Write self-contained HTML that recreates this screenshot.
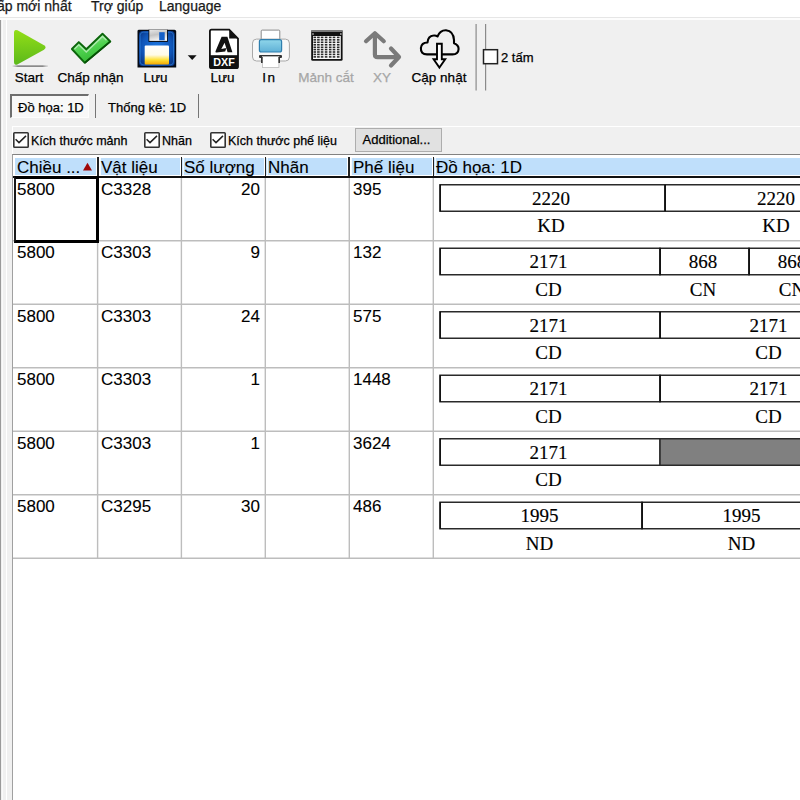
<!DOCTYPE html>
<html><head><meta charset="utf-8">
<style>
*{margin:0;padding:0;box-sizing:border-box}
html,body{width:800px;height:800px;overflow:hidden;background:#f0f0f0;font-family:"Liberation Sans",sans-serif;color:#000;position:relative}
.mt,.lbl,.chk{-webkit-text-stroke:0.25px currentColor}
.ct,.ht{-webkit-text-stroke:0.1px currentColor}
.sn{-webkit-text-stroke:0.15px #000}
.a{position:absolute}
.menu{position:absolute;left:0;top:0;width:800px;height:17px;background:#fff}
.mt{position:absolute;top:-2px;font-size:14px;line-height:17px;white-space:nowrap;color:#1a1a1a}
.lbl{position:absolute;top:70px;font-size:13.5px;line-height:15px;text-align:center;white-space:nowrap;width:80px}
.ct{position:absolute;font-size:17px;line-height:17px;white-space:nowrap}
.ct.r{text-align:right}
.ht{position:absolute;top:159px;font-size:17px;line-height:17px;white-space:nowrap}
.hd{position:absolute;top:157px;width:1.5px;height:19.3px;background:#222;box-shadow:-1px 0 0 #fff,1.8px 0 0 #fff}
.vl{position:absolute;top:177px;width:1px;height:382px;background:#c8c8c8}
.hl{position:absolute;left:13px;width:787px;height:1px;background:#c0c0c0}
.sn{position:absolute;width:100px;text-align:center;font-family:"Liberation Serif",serif;font-size:19px;line-height:19px;white-space:nowrap}
.cb{position:absolute;width:15.5px;height:15.5px;border:2px solid #474747;background:#fff}
.chk{position:absolute;font-size:12.5px;line-height:15px;white-space:nowrap}
</style></head><body>
<!-- menu -->
<div class="menu"></div>
<div class="a" style="left:0;top:17px;width:800px;height:1px;background:#e6e6e6"></div>
<div class="a" style="left:0;top:18px;width:800px;height:2px;background:#fdfdfd"></div>
<div class="mt" style="left:-3px">ấp mới nhất</div>
<div class="mt" style="left:91px">Trợ giúp</div>
<div class="mt" style="left:159px">Language</div>
<!-- left edges -->
<div class="a" style="left:0;top:20px;width:1.2px;height:780px;background:#9a9a9a"></div>
<div class="a" style="left:1.5px;top:20px;width:1.5px;height:780px;background:#fafafa"></div>
<div class="a" style="left:6px;top:20px;width:1px;height:780px;background:#fff"></div>
<svg class="a" style="left:0;top:0" width="800" height="100" viewBox="0 0 800 100">
<defs>
<linearGradient id="gPlay" x1="0" y1="0" x2="0" y2="1"><stop offset="0" stop-color="#93de17"/><stop offset="1" stop-color="#5cb91b"/></linearGradient>
<linearGradient id="gChk" x1="0.2" y1="0" x2="0.6" y2="1"><stop offset="0" stop-color="#9fe09f"/><stop offset="0.5" stop-color="#4fd24f"/><stop offset="1" stop-color="#2fb52f"/></linearGradient>
<radialGradient id="gFl" cx="0.5" cy="0.45" r="0.6"><stop offset="0" stop-color="#1f78e0"/><stop offset="0.7" stop-color="#0f55b8"/><stop offset="1" stop-color="#0a3a8c"/></radialGradient>
<linearGradient id="gLab" x1="0" y1="0" x2="0" y2="1"><stop offset="0" stop-color="#ffffff"/><stop offset="0.5" stop-color="#fffbe8"/><stop offset="0.75" stop-color="#ffe23a"/><stop offset="1" stop-color="#f5a800"/></linearGradient>
<linearGradient id="gSh" x1="0" y1="0" x2="0.3" y2="1"><stop offset="0" stop-color="#e8e8e8"/><stop offset="0.5" stop-color="#c4c4c4"/><stop offset="1" stop-color="#f4f4f4"/></linearGradient>
<linearGradient id="gPr" x1="0" y1="0" x2="0" y2="1"><stop offset="0" stop-color="#8fd6ea"/><stop offset="1" stop-color="#5fb0d6"/></linearGradient>
<linearGradient id="gShadowH" x1="0" y1="0" x2="1" y2="0"><stop offset="0" stop-color="#b0b0b0" stop-opacity="0.3"/><stop offset="0.15" stop-color="#8a8a8a"/><stop offset="0.85" stop-color="#8a8a8a"/><stop offset="1" stop-color="#b0b0b0" stop-opacity="0.3"/></linearGradient>
<radialGradient id="gShadow" cx="0.5" cy="0.5" r="0.5"><stop offset="0" stop-color="#888"/><stop offset="1" stop-color="#f0f0f0" stop-opacity="0"/></radialGradient>
</defs>
<!-- play -->
<rect x="12.5" y="65.3" width="35.5" height="1.8" fill="url(#gShadowH)"/><rect x="12.5" y="67.1" width="35.5" height="1" fill="#fafafa" opacity="0.7"/>
<path d="M17.5 30.3 Q14 28.8 14 33 L14 61.5 Q14 66 17.8 64.2 L44 49.8 Q47.2 47.5 44 45.3 Z" fill="url(#gPlay)"/>
<!-- check -->
<path d="M71.9 49 L78.8 42.1 L86.3 49.3 L102.5 33.7 L110.3 41.5 L84.8 62.8 Z" fill="url(#gChk)" stroke="#0b650b" stroke-width="1.9" stroke-linejoin="round"/>
<path d="M74.5 49 L78.8 44.8 L86.3 52 L102.5 36.5 L106.5 40.3" fill="none" stroke="#c8f0c8" stroke-width="1.3" opacity="0.75"/>
<path d="M110.3 41.5 L84.8 62.8" fill="none" stroke="#065006" stroke-width="1.6"/>
<!-- floppy -->
<path d="M137.5 31 Q137.5 29.7 139 29.7 L174.5 29.7 Q176.2 29.7 176.2 31.5 L176.2 67.5 L137.5 67.5 Z" fill="#050a14"/>
<rect x="139" y="31" width="35.7" height="35" rx="3.5" fill="url(#gFl)"/><rect x="140.2" y="32.2" width="33.3" height="32.6" rx="3" fill="none" stroke="#3a9af5" stroke-width="0.8" opacity="0.6"/>
<rect x="148.5" y="29.7" width="19.3" height="12.2" fill="#0a0a0a"/><rect x="149.3" y="29.7" width="17.7" height="11.2" fill="url(#gSh)"/>
<rect x="159.2" y="32.2" width="5.5" height="8.1" fill="#1560c8"/>
<rect x="144.7" y="45.4" width="24.3" height="19.1" rx="1" fill="url(#gLab)"/>
<!-- dropdown arrow -->
<path d="M187.7 55.2 L196.6 55.2 L192.2 59.9 Z" fill="#111"/>
<!-- dxf -->
<path d="M211.5 29.7 L229.2 29.7 L238 38.5 L238 66.5 Q238 68.2 236.3 68.2 L211.5 68.2 Q209.9 68.2 209.9 66.5 L209.9 31.4 Q209.9 29.7 211.5 29.7 Z" fill="#fff" stroke="#111" stroke-width="1.8"/>
<path d="M229.2 29.7 L238 38.5 L229.2 38.5 Z" fill="#111"/>
<rect x="209.9" y="55.2" width="28.1" height="13" fill="#111"/>
<text x="224" y="65.6" font-family="Liberation Sans" font-weight="bold" font-size="11" fill="#fff" text-anchor="middle" textLength="21.5" lengthAdjust="spacingAndGlyphs">DXF</text>
<path d="M221.6 36.8 L227.4 36.8 L232.4 52.2 L227.6 52.2 L224.6 42.8 L221.3 48.9 L226.4 48 L225.2 51.4 L216.6 52.6 Q215 52.7 215.5 51.2 Z" fill="#111"/>
<!-- printer -->
<rect x="261.2" y="30.1" width="18.6" height="10" rx="1" fill="#fff" stroke="#8a8a8a" stroke-width="1"/>
<rect x="252.5" y="39.1" width="36.9" height="21.9" rx="4" fill="#f8f8f8" stroke="#a8a8a8" stroke-width="1"/>
<rect x="259.4" y="39.7" width="22.2" height="12.3" rx="2" fill="url(#gPr)" stroke="#2f7fae" stroke-width="1.2"/>
<rect x="259" y="55" width="23" height="3" rx="1" fill="#333"/>
<rect x="262.4" y="56.5" width="16.5" height="11" fill="#fff" stroke="#bbb" stroke-width="0.8"/>
<rect x="261" y="57" width="1.6" height="6" fill="#333"/>
<rect x="278.4" y="57" width="1.6" height="6" fill="#333"/>
<!-- grid icon -->
<rect x="311.2" y="30" width="31.4" height="30.75" rx="1.5" fill="#111"/>
<rect x="311.2" y="30" width="31.4" height="2" fill="#7a7a7a"/>
<rect x="312.2" y="33" width="1.6" height="2" fill="#888"/><rect x="340" y="33" width="1.6" height="2" fill="#888"/>
<rect x="313" y="36" width="27.8" height="23" fill="#fafafa"/>
<rect x="313.50" y="36.60" width="2.6" height="1.6" fill="#2a2a2a"/><rect x="313.50" y="39.05" width="2.6" height="1.6" fill="#2a2a2a"/><rect x="313.50" y="41.50" width="2.6" height="1.6" fill="#2a2a2a"/><rect x="313.50" y="44.00" width="2.6" height="1.6" fill="#2a2a2a"/><rect x="313.50" y="46.50" width="2.6" height="1.6" fill="#2a2a2a"/><rect x="313.50" y="48.80" width="2.6" height="1.6" fill="#2a2a2a"/><rect x="313.50" y="51.20" width="2.6" height="1.6" fill="#2a2a2a"/><rect x="313.50" y="53.60" width="2.6" height="1.6" fill="#2a2a2a"/><rect x="313.50" y="56.10" width="2.6" height="1.6" fill="#2a2a2a"/><rect x="317.10" y="36.60" width="2.6" height="1.6" fill="#2a2a2a"/><rect x="317.10" y="39.05" width="2.6" height="1.6" fill="#2a2a2a"/><rect x="317.10" y="41.50" width="2.6" height="1.6" fill="#2a2a2a"/><rect x="317.10" y="44.00" width="2.6" height="1.6" fill="#2a2a2a"/><rect x="317.10" y="46.50" width="2.6" height="1.6" fill="#2a2a2a"/><rect x="317.10" y="48.80" width="2.6" height="1.6" fill="#2a2a2a"/><rect x="317.10" y="51.20" width="2.6" height="1.6" fill="#2a2a2a"/><rect x="317.10" y="53.60" width="2.6" height="1.6" fill="#2a2a2a"/><rect x="317.10" y="56.10" width="2.6" height="1.6" fill="#2a2a2a"/><rect x="320.80" y="36.60" width="2.6" height="1.6" fill="#2a2a2a"/><rect x="320.80" y="39.05" width="2.6" height="1.6" fill="#2a2a2a"/><rect x="320.80" y="41.50" width="2.6" height="1.6" fill="#2a2a2a"/><rect x="320.80" y="44.00" width="2.6" height="1.6" fill="#2a2a2a"/><rect x="320.80" y="46.50" width="2.6" height="1.6" fill="#2a2a2a"/><rect x="320.80" y="48.80" width="2.6" height="1.6" fill="#2a2a2a"/><rect x="320.80" y="51.20" width="2.6" height="1.6" fill="#2a2a2a"/><rect x="320.80" y="53.60" width="2.6" height="1.6" fill="#2a2a2a"/><rect x="320.80" y="56.10" width="2.6" height="1.6" fill="#2a2a2a"/><rect x="324.80" y="36.60" width="2.6" height="1.6" fill="#2a2a2a"/><rect x="324.80" y="39.05" width="2.6" height="1.6" fill="#2a2a2a"/><rect x="324.80" y="41.50" width="2.6" height="1.6" fill="#2a2a2a"/><rect x="324.80" y="44.00" width="2.6" height="1.6" fill="#2a2a2a"/><rect x="324.80" y="46.50" width="2.6" height="1.6" fill="#2a2a2a"/><rect x="324.80" y="48.80" width="2.6" height="1.6" fill="#2a2a2a"/><rect x="324.80" y="51.20" width="2.6" height="1.6" fill="#2a2a2a"/><rect x="324.80" y="53.60" width="2.6" height="1.6" fill="#2a2a2a"/><rect x="324.80" y="56.10" width="2.6" height="1.6" fill="#2a2a2a"/><rect x="328.90" y="36.60" width="2.6" height="1.6" fill="#2a2a2a"/><rect x="328.90" y="39.05" width="2.6" height="1.6" fill="#2a2a2a"/><rect x="328.90" y="41.50" width="2.6" height="1.6" fill="#2a2a2a"/><rect x="328.90" y="44.00" width="2.6" height="1.6" fill="#2a2a2a"/><rect x="328.90" y="46.50" width="2.6" height="1.6" fill="#2a2a2a"/><rect x="328.90" y="48.80" width="2.6" height="1.6" fill="#2a2a2a"/><rect x="328.90" y="51.20" width="2.6" height="1.6" fill="#2a2a2a"/><rect x="328.90" y="53.60" width="2.6" height="1.6" fill="#2a2a2a"/><rect x="328.90" y="56.10" width="2.6" height="1.6" fill="#2a2a2a"/><rect x="332.70" y="36.60" width="2.6" height="1.6" fill="#2a2a2a"/><rect x="332.70" y="39.05" width="2.6" height="1.6" fill="#2a2a2a"/><rect x="332.70" y="41.50" width="2.6" height="1.6" fill="#2a2a2a"/><rect x="332.70" y="44.00" width="2.6" height="1.6" fill="#2a2a2a"/><rect x="332.70" y="46.50" width="2.6" height="1.6" fill="#2a2a2a"/><rect x="332.70" y="48.80" width="2.6" height="1.6" fill="#2a2a2a"/><rect x="332.70" y="51.20" width="2.6" height="1.6" fill="#2a2a2a"/><rect x="332.70" y="53.60" width="2.6" height="1.6" fill="#2a2a2a"/><rect x="332.70" y="56.10" width="2.6" height="1.6" fill="#2a2a2a"/><rect x="336.90" y="36.60" width="2.6" height="1.6" fill="#2a2a2a"/><rect x="336.90" y="39.05" width="2.6" height="1.6" fill="#2a2a2a"/><rect x="336.90" y="41.50" width="2.6" height="1.6" fill="#2a2a2a"/><rect x="336.90" y="44.00" width="2.6" height="1.6" fill="#2a2a2a"/><rect x="336.90" y="46.50" width="2.6" height="1.6" fill="#2a2a2a"/><rect x="336.90" y="48.80" width="2.6" height="1.6" fill="#2a2a2a"/><rect x="336.90" y="51.20" width="2.6" height="1.6" fill="#2a2a2a"/><rect x="336.90" y="53.60" width="2.6" height="1.6" fill="#2a2a2a"/><rect x="336.90" y="56.10" width="2.6" height="1.6" fill="#2a2a2a"/>
<!-- xy arrows -->
<g fill="none" stroke="#7a7a7a" stroke-width="4.2" stroke-linejoin="round" stroke-linecap="round">
<path d="M374.9 34 L374.9 54.5 Q374.9 57.2 377.6 57.2 L398 57.2"/>
<path d="M366 41.2 L374.9 33.3 L383.8 41.2"/>
<path d="M391 48.5 L399 57 L391 65.5"/>
</g>
<!-- cloud -->
<path d="M427 54.4 Q420.5 54.4 420.9 48 Q421.5 42.5 427.5 42.5 Q428 36 433.5 35.5 Q436 35.2 437.5 36.5 Q440 30 446 30.2 Q453.5 31 454 40 L454 43.3 Q458.7 45 458.6 49 Q458.3 54.4 452.5 54.4 Z" fill="none" stroke="#000" stroke-width="2.1" stroke-linejoin="round"/>
<path d="M437 43.8 L441.8 43.8 L441.8 59.3 L445.2 59.3 L439.4 67.6 L433.6 59.3 L437 59.3 Z" fill="#fff" stroke="#000" stroke-width="1.9" stroke-linejoin="miter"/>
<!-- separators -->
<rect x="475.5" y="24" width="1.2" height="66.5" fill="#8a8a8a"/>
<rect x="485" y="24" width="1.2" height="66.5" fill="#8a8a8a"/>
<rect x="483.5" y="49.7" width="14" height="14" fill="#fff" stroke="#222" stroke-width="1.5"/>
</svg>
<div class="lbl" style="left:-11px">Start</div>
<div class="lbl" style="left:50.6px">Chấp nhận</div>
<div class="lbl" style="left:115.5px">Lưu</div>
<div class="lbl" style="left:182.5px">Lưu</div>
<div class="lbl" style="left:229.5px;letter-spacing:1.5px">In</div>
<div class="lbl" style="left:286px;color:#a6a6a6">Mảnh cắt</div>
<div class="lbl" style="left:342px;color:#a6a6a6">XY</div>
<div class="lbl" style="left:399px">Cập nhật</div>
<div class="chk" style="left:501px;top:50px;font-size:13px">2 tấm</div>
<!-- tabs -->
<div class="a" style="left:9.6px;top:93.7px;width:79px;height:24.3px;background:#f8f8f8;border-top:2.4px solid #6e6e6e;border-left:2.4px solid #6e6e6e;border-right:1px solid #fdfdfd;border-bottom:1.6px solid #fdfdfd"></div>
<div class="chk" style="left:18px;top:99.5px;font-size:13px">Đồ họa: 1D</div>
<div class="a" style="left:94.5px;top:94px;width:1.3px;height:24px;background:#757575"></div>
<div class="chk" style="left:108px;top:99.5px;font-size:13px">Thống kê: 1D</div>
<div class="a" style="left:197.5px;top:94px;width:1.3px;height:24px;background:#757575"></div>
<!-- panel top highlight -->
<div class="a" style="left:12px;top:126px;width:788px;height:1px;background:#fff"></div>
<div class="a" style="left:12px;top:126px;width:1px;height:28px;background:#fff"></div>
<!-- checkboxes -->
<svg class="a" style="left:13px;top:132px" width="16" height="16" viewBox="0 0 16 16"><rect x="0.8" y="0.8" width="14.4" height="14.4" rx="0.8" fill="#fff" stroke="#333" stroke-width="1.6"/><path d="M2.6 7.2 L6 10.6 L13 3.9" fill="none" stroke="#222" stroke-width="1.5"/></svg>
<div class="chk" style="left:31px;top:133.5px">Kích thước mảnh</div>
<svg class="a" style="left:144px;top:132px" width="16" height="16" viewBox="0 0 16 16"><rect x="0.8" y="0.8" width="14.4" height="14.4" rx="0.8" fill="#fff" stroke="#333" stroke-width="1.6"/><path d="M2.6 7.2 L6 10.6 L13 3.9" fill="none" stroke="#222" stroke-width="1.5"/></svg>
<div class="chk" style="left:162px;top:133.5px">Nhãn</div>
<svg class="a" style="left:210px;top:132px" width="16" height="16" viewBox="0 0 16 16"><rect x="0.8" y="0.8" width="14.4" height="14.4" rx="0.8" fill="#fff" stroke="#333" stroke-width="1.6"/><path d="M2.6 7.2 L6 10.6 L13 3.9" fill="none" stroke="#222" stroke-width="1.5"/></svg>
<div class="chk" style="left:228px;top:133.5px">Kích thước phế liệu</div>
<div class="a" style="left:354.5px;top:128px;width:87.5px;height:23.5px;background:#e1e1e1;border:1px solid #adadad"></div>
<div class="chk" style="left:362.5px;top:132px;font-size:13px">Additional...</div>
<!-- grid -->
<div class="a" style="left:12px;top:154px;width:788px;height:646px;background:#fff;border-top:1px solid #828282;border-left:1px solid #a0a0a0"></div>
<div class="a" style="left:15.25px;top:158px;width:785px;height:16.75px;background:#bfdffb"></div>
<div class="a" style="left:13px;top:176.3px;width:787px;height:2.1px;background:#111"></div>
<div class="hd" style="left:97px"></div>
<div class="hd" style="left:180.5px"></div>
<div class="hd" style="left:264.5px"></div>
<div class="hd" style="left:348px"></div>
<div class="hd" style="left:432.5px"></div>
<div class="ht" style="left:17px">Chiều ...</div>
<svg class="a" style="left:82px;top:162px" width="11" height="9" viewBox="0 0 11 9"><path d="M1 8.5 L5.5 0.8 L10 8.5 Z" fill="#a00808"/></svg>
<div class="ht" style="left:101px">Vật liệu</div>
<div class="ht" style="left:184px">Số lượng</div>
<div class="ht" style="left:268px">Nhãn</div>
<div class="ht" style="left:353px">Phế liệu</div>
<div class="ht" style="left:436px">Đồ họa: 1D</div>
<svg class="a" style="left:0;top:0" width="800" height="800" viewBox="0 0 800 800"><line x1="13" y1="240.75" x2="800" y2="240.75" stroke="#bdbdbd" stroke-width="1.4"/>
<line x1="13" y1="304.25" x2="800" y2="304.25" stroke="#bdbdbd" stroke-width="1.4"/>
<line x1="13" y1="367.75" x2="800" y2="367.75" stroke="#bdbdbd" stroke-width="1.4"/>
<line x1="13" y1="431.25" x2="800" y2="431.25" stroke="#bdbdbd" stroke-width="1.4"/>
<line x1="13" y1="494.75" x2="800" y2="494.75" stroke="#bdbdbd" stroke-width="1.4"/>
<line x1="13" y1="558.25" x2="800" y2="558.25" stroke="#bdbdbd" stroke-width="1.4"/>
<line x1="97.6" y1="178" x2="97.6" y2="558.25" stroke="#bdbdbd" stroke-width="1.4"/>
<line x1="181.4" y1="178" x2="181.4" y2="558.25" stroke="#bdbdbd" stroke-width="1.4"/>
<line x1="265.3" y1="178" x2="265.3" y2="558.25" stroke="#bdbdbd" stroke-width="1.4"/>
<line x1="349.3" y1="178" x2="349.3" y2="558.25" stroke="#bdbdbd" stroke-width="1.4"/>
<line x1="433.3" y1="178" x2="433.3" y2="558.25" stroke="#bdbdbd" stroke-width="1.4"/>
<rect x="440" y="184.75" width="225" height="26.50" fill="#fff" stroke="#2a2a2a" stroke-width="1.5"/>
<line x1="440.2" y1="184.75" x2="440.2" y2="211.25" stroke="#000" stroke-width="1.2"/>
<rect x="665" y="184.75" width="225" height="26.50" fill="#fff" stroke="#2a2a2a" stroke-width="1.5"/>
<line x1="665.2" y1="184.75" x2="665.2" y2="211.25" stroke="#000" stroke-width="1.2"/>
<rect x="440" y="248.25" width="220" height="26.50" fill="#fff" stroke="#2a2a2a" stroke-width="1.5"/>
<line x1="440.2" y1="248.25" x2="440.2" y2="274.75" stroke="#000" stroke-width="1.2"/>
<rect x="660" y="248.25" width="89" height="26.50" fill="#fff" stroke="#2a2a2a" stroke-width="1.5"/>
<line x1="660.2" y1="248.25" x2="660.2" y2="274.75" stroke="#000" stroke-width="1.2"/>
<rect x="749" y="248.25" width="89" height="26.50" fill="#fff" stroke="#2a2a2a" stroke-width="1.5"/>
<line x1="749.2" y1="248.25" x2="749.2" y2="274.75" stroke="#000" stroke-width="1.2"/>
<rect x="440" y="311.75" width="220" height="26.50" fill="#fff" stroke="#2a2a2a" stroke-width="1.5"/>
<line x1="440.2" y1="311.75" x2="440.2" y2="338.25" stroke="#000" stroke-width="1.2"/>
<rect x="660" y="311.75" width="220" height="26.50" fill="#fff" stroke="#2a2a2a" stroke-width="1.5"/>
<line x1="660.2" y1="311.75" x2="660.2" y2="338.25" stroke="#000" stroke-width="1.2"/>
<rect x="440" y="375.25" width="220" height="26.50" fill="#fff" stroke="#2a2a2a" stroke-width="1.5"/>
<line x1="440.2" y1="375.25" x2="440.2" y2="401.75" stroke="#000" stroke-width="1.2"/>
<rect x="660" y="375.25" width="220" height="26.50" fill="#fff" stroke="#2a2a2a" stroke-width="1.5"/>
<line x1="660.2" y1="375.25" x2="660.2" y2="401.75" stroke="#000" stroke-width="1.2"/>
<rect x="440" y="438.75" width="220" height="26.50" fill="#fff" stroke="#2a2a2a" stroke-width="1.5"/>
<line x1="440.2" y1="438.75" x2="440.2" y2="465.25" stroke="#000" stroke-width="1.2"/>
<rect x="660" y="438.75" width="220" height="26.50" fill="#808080" stroke="#2a2a2a" stroke-width="1.5"/>
<rect x="440" y="502.25" width="202" height="26.50" fill="#fff" stroke="#2a2a2a" stroke-width="1.5"/>
<line x1="440.2" y1="502.25" x2="440.2" y2="528.75" stroke="#000" stroke-width="1.2"/>
<rect x="642" y="502.25" width="202" height="26.50" fill="#fff" stroke="#2a2a2a" stroke-width="1.5"/>
<line x1="642.2" y1="502.25" x2="642.2" y2="528.75" stroke="#000" stroke-width="1.2"/></svg>
<div class="ct" style="left:17px;top:180.96px">5800</div>
<div class="ct" style="left:101px;top:180.96px">C3328</div>
<div class="ct r" style="left:185px;width:75px;top:180.96px">20</div>
<div class="ct" style="left:353px;top:180.96px">395</div>
<div class="sn" style="left:501.00px;top:188.84px">2220</div>
<div class="sn" style="left:501.00px;top:216.14px">KD</div>
<div class="sn" style="left:726.00px;top:188.84px">2220</div>
<div class="sn" style="left:726.00px;top:216.14px">KD</div>
<div class="ct" style="left:17px;top:244.46px">5800</div>
<div class="ct" style="left:101px;top:244.46px">C3303</div>
<div class="ct r" style="left:185px;width:75px;top:244.46px">9</div>
<div class="ct" style="left:353px;top:244.46px">132</div>
<div class="sn" style="left:498.50px;top:252.34px">2171</div>
<div class="sn" style="left:498.50px;top:279.64px">CD</div>
<div class="sn" style="left:653.00px;top:252.34px">868</div>
<div class="sn" style="left:653.00px;top:279.64px">CN</div>
<div class="sn" style="left:742.00px;top:252.34px">868</div>
<div class="sn" style="left:742.00px;top:279.64px">CN</div>
<div class="ct" style="left:17px;top:307.96px">5800</div>
<div class="ct" style="left:101px;top:307.96px">C3303</div>
<div class="ct r" style="left:185px;width:75px;top:307.96px">24</div>
<div class="ct" style="left:353px;top:307.96px">575</div>
<div class="sn" style="left:498.50px;top:315.84px">2171</div>
<div class="sn" style="left:498.50px;top:343.14px">CD</div>
<div class="sn" style="left:718.50px;top:315.84px">2171</div>
<div class="sn" style="left:718.50px;top:343.14px">CD</div>
<div class="ct" style="left:17px;top:371.46px">5800</div>
<div class="ct" style="left:101px;top:371.46px">C3303</div>
<div class="ct r" style="left:185px;width:75px;top:371.46px">1</div>
<div class="ct" style="left:353px;top:371.46px">1448</div>
<div class="sn" style="left:498.50px;top:379.34px">2171</div>
<div class="sn" style="left:498.50px;top:406.64px">CD</div>
<div class="sn" style="left:718.50px;top:379.34px">2171</div>
<div class="sn" style="left:718.50px;top:406.64px">CD</div>
<div class="ct" style="left:17px;top:434.96px">5800</div>
<div class="ct" style="left:101px;top:434.96px">C3303</div>
<div class="ct r" style="left:185px;width:75px;top:434.96px">1</div>
<div class="ct" style="left:353px;top:434.96px">3624</div>
<div class="sn" style="left:498.50px;top:442.84px">2171</div>
<div class="sn" style="left:498.50px;top:470.14px">CD</div>
<div class="ct" style="left:17px;top:498.46px">5800</div>
<div class="ct" style="left:101px;top:498.46px">C3295</div>
<div class="ct r" style="left:185px;width:75px;top:498.46px">30</div>
<div class="ct" style="left:353px;top:498.46px">486</div>
<div class="sn" style="left:489.50px;top:506.34px">1995</div>
<div class="sn" style="left:489.50px;top:533.64px">ND</div>
<div class="sn" style="left:691.50px;top:506.34px">1995</div>
<div class="sn" style="left:691.50px;top:533.64px">ND</div><div class="a" style="left:14px;top:176px;width:85.3px;height:66.6px;border:3px solid #000;border-left:2px solid #1a1a1a"></div>
</body></html>
